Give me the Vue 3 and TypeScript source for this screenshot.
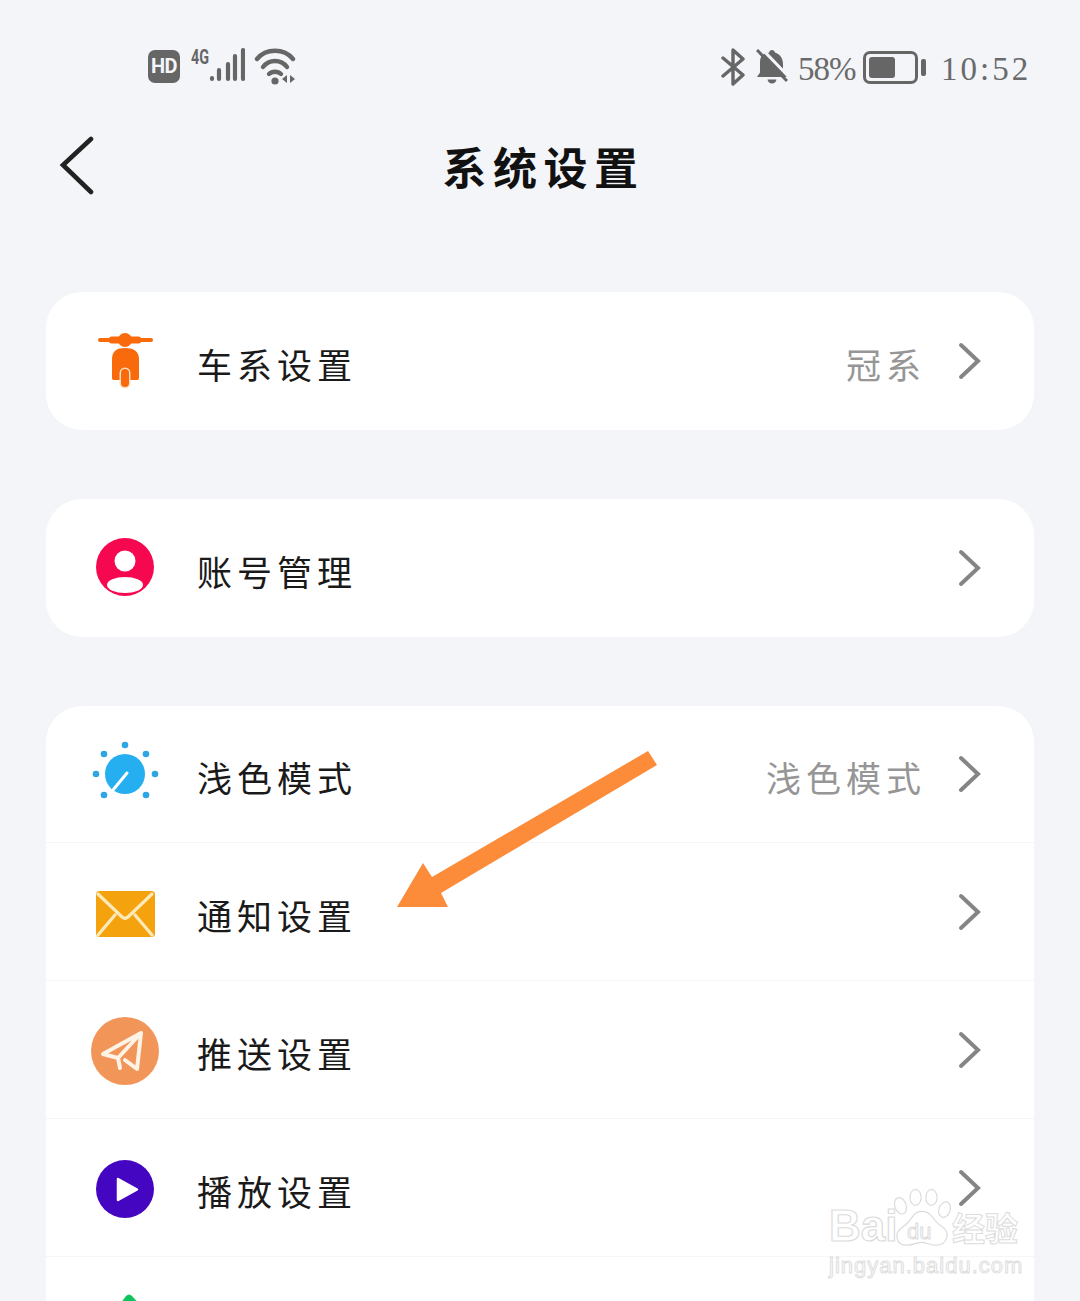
<script setup lang="ts">
interface Row {
  label: string
  icon: string
  value?: string
  first?: boolean
}
const groups: Row[][] = [
  [{ label: '车系设置', icon: 'scooter', value: '冠系' }],
  [{ label: '账号管理', icon: 'account' }],
  [
    { label: '浅色模式', icon: 'sun', value: '浅色模式', first: true },
    { label: '通知设置', icon: 'mail' },
    { label: '推送设置', icon: 'plane' },
    { label: '播放设置', icon: 'play' },
    { label: '', icon: 'green' },
  ],
]
const sunDots: [number, number][] = [
  [35, 6], [14, 15], [56, 15], [6, 35], [65, 35], [14, 56], [56, 56],
]
</script>

<template>
  <div class="page">
    <div class="status">
      <div class="status-left">
        <span class="hd">HD</span>
        <div class="net">
          <span class="g4">4G</span>
          <svg class="bars" width="36" height="36" viewBox="0 0 36 36">
            <g stroke="#666" stroke-width="4.2" stroke-linecap="round">
              <path d="M3 31v1M10 23v9M19 17v15M26 9v23M34 3v29" />
            </g>
          </svg>
        </div>
        <svg class="wifi" width="42" height="38" viewBox="0 0 42 38">
          <g fill="none" stroke="#666" stroke-width="4.4" stroke-linecap="round">
            <path d="M3 12C12 1 30 1 39 12" />
            <path d="M9 20C15 12 27 12 33 20" />
            <path d="M15 27C18 24 24 24 27 27" />
          </g>
          <circle cx="21" cy="34" r="3.6" fill="#666" />
          <path d="M33 28v8l-5-4zM36 28v8l5-4z" fill="#666" />
        </svg>
      </div>
      <div class="status-right">
        <svg class="bt" width="24" height="38" viewBox="0 0 24 38">
          <path d="M2 10L22 27L12 36V2L22 11L2 28" fill="none" stroke="#666" stroke-width="3.4" stroke-linejoin="round" stroke-linecap="round" />
        </svg>
        <svg class="bell" width="32" height="36" viewBox="0 0 32 36">
          <path d="M16 1c1.600 0 2.700 1 2.900 2.500C24 5 27 9.500 27 15v8l4 5H1l3-4.500V13c0-4 1.500-7 5-8.500 1.500-.6 3-.8 4-.6C13.300 2 14.400 1 16 1z" fill="#666" />
          <path d="M11.500 30.500h9c-.5 2.500-2.300 4-4.500 4s-4-1.500-4.500-4z" fill="#666" />
          <path d="M5 -1L34 29" stroke="#f4f5f9" stroke-width="3" />
          <path d="M1 1L31 32" stroke="#666" stroke-width="3" />
        </svg>
        <span class="pct">58%</span>
        <div class="battery">
          <div class="battery-body"><div class="battery-fill"></div></div>
          <div class="battery-nub"></div>
        </div>
        <span class="clock">10:52</span>
      </div>
    </div>

    <header class="header">
      <svg class="back" width="36" height="60" viewBox="0 0 36 60">
        <path d="M32 3L4 29L32 56" fill="none" stroke="#222" stroke-width="4.600" stroke-linecap="round" stroke-linejoin="miter" />
      </svg>
      <h1 class="title">系统设置</h1>
    </header>

    <main class="groups">
      <section v-for="(group, gi) in groups" :key="gi" class="card">
        <div
          v-for="(row, ri) in group"
          :key="ri"
          class="row"
          :class="{ 'row-first': row.first, 'row-rule': ri > 0 }"
        >
          <svg class="icon" width="70" height="70" viewBox="0 0 70 70">
            <template v-if="row.icon === 'scooter'">
              <path d="M10 14H61" stroke="#f96a0c" stroke-width="4" stroke-linecap="round" />
              <path d="M22 14H48" stroke="#f96a0c" stroke-width="7" stroke-linecap="round" />
              <circle cx="35" cy="14" r="7" fill="#f96a0c" />
              <path d="M22 33c0-8 5-11 13-11s14 3 14 11v19c0 1.500-1 2-2 2H24c-1 0-2-.5-2-2z" fill="#f96a0c" />
              <rect x="29.500" y="41.500" width="11" height="21" rx="5.500" fill="#fde0c4" />
              <rect x="31" y="43" width="8" height="18" rx="4" fill="#f96a0c" />
            </template>
            <template v-else-if="row.icon === 'account'">
              <circle cx="35" cy="34" r="29" fill="#f5084f" />
              <circle cx="35" cy="28" r="10.500" fill="#fff" />
              <ellipse cx="35" cy="52" rx="18" ry="8" fill="#fff" />
            </template>
            <template v-else-if="row.icon === 'sun'">
              <circle cx="35" cy="35" r="20" fill="#25aef0" />
              <circle v-for="(d, i) in sunDots" :key="i" :cx="d[0]" :cy="d[1]" r="3.300" fill="#2fa6e3" />
              <path d="M23 51L37 34" stroke="#fff" stroke-width="3" stroke-linecap="round" />
            </template>
            <template v-else-if="row.icon === 'mail'">
              <rect x="6" y="14" width="59" height="46" rx="3.500" fill="#f5a20f" />
              <path d="M8 17L32 40Q35 42.500 38 40L62 17M8 58L25 38M62 58L45 38" fill="none" stroke="#fdeab8" stroke-width="3.200" stroke-linecap="round" />
            </template>
            <template v-else-if="row.icon === 'plane'">
              <circle cx="35" cy="36" r="34" fill="#f29559" />
              <path d="M51 18L13 39L28 43L30 53M28 43L51 18L47 54L35 45" fill="none" stroke="#fff3e6" stroke-width="4" stroke-linecap="round" stroke-linejoin="round" />
            </template>
            <template v-else-if="row.icon === 'play'">
              <circle cx="35" cy="36" r="29" fill="#4406c0" />
              <path d="M28 26L47 36.500L28 47z" fill="#fff" stroke="#fff" stroke-width="2.500" stroke-linejoin="round" />
            </template>
            <template v-else-if="row.icon === 'green'">
              <path d="M36 5Q39 2 42 5L52 16H28z" fill="#0fc45f" />
            </template>
          </svg>
          <span class="label">{{ row.label }}</span>
          <span v-if="row.value" class="value">{{ row.value }}</span>
          <svg class="chev" width="24" height="38" viewBox="0 0 24 38">
            <path d="M3 3L20 19L3 35" fill="none" stroke="#858585" stroke-width="4" stroke-linecap="round" />
          </svg>
        </div>
      </section>
    </main>

    <svg class="arrow" width="300" height="190" viewBox="380 740 300 190">
      <polygon points="648,751 657,765 441,893 448,907 397,907 423,863 432,877" fill="#fd8c3a" />
    </svg>

    <div class="watermark">
      <div class="wm-top">
        <span class="wm-bai">Bai</span>
        <div class="wm-paw">
          <svg width="60" height="62" viewBox="0 0 64 62">
            <g fill="none" stroke="#dcdcdc" stroke-width="1.300">
              <ellipse cx="8" cy="18" rx="6" ry="9" transform="rotate(-20 8 18)" />
              <ellipse cx="24" cy="9" rx="6" ry="8.500" />
              <ellipse cx="41" cy="9" rx="6" ry="8.500" />
              <ellipse cx="55" cy="22" rx="6" ry="8.500" transform="rotate(20 55 22)" />
              <path d="M31 24C42 24 42 34 52 40C62 46 58 60 46 60C38 60 36 57 31 57C25 57 22 60 15 60C3 60 0 47 11 40C21 34 20 24 31 24Z" />
            </g>
          </svg>
          <span class="wm-du">du</span>
        </div>
        <span class="wm-cn">经验</span>
      </div>
      <div class="wm-url">jingyan.baidu.com</div>
    </div>
  </div>
</template>

<style scoped>
.page {
  position: relative;
  width: 1080px;
  height: 1301px;
  overflow: hidden;
  background: #f4f5f9;
  font-family: "Noto Sans CJK SC", "Liberation Sans", sans-serif;
  color: #111;
}
.status {
  height: 110px;
  box-sizing: border-box;
  padding: 46px 52px 0 148px;
  display: flex;
  justify-content: space-between;
  align-items: flex-start;
}
.status-left {
  display: flex;
  align-items: flex-start;
}
.hd {
  width: 32px;
  height: 33px;
  margin-top: 4px;
  border-radius: 7px;
  background: #666;
  color: #f4f5f9;
  font: 700 20px/33px "Roboto", sans-serif;
  text-align: center;
  letter-spacing: -0.5px;
}
.net {
  position: relative;
  margin-left: 11px;
  width: 54px;
  height: 38px;
}
.g4 {
  position: absolute;
  left: 0;
  top: 0;
  font: 700 20px/22px "Roboto", sans-serif;
  color: #666;
  transform: scaleX(0.72);
  transform-origin: left top;
}
.bars {
  position: absolute;
  left: 18px;
  top: 1px;
}
.wifi {
  margin-left: 9px;
  margin-top: 1px;
}
.status-right {
  display: flex;
  align-items: center;
  height: 44px;
  margin-top: -1px;
}
.bt {
  margin-right: 11px;
}
.pct {
  margin-left: 10px;
  margin-top: 3px;
  font: 400 33px/44px "Liberation Serif", serif;
  color: #6a6a6a;
  width: 58px;
  white-space: nowrap;
  letter-spacing: -1px;
}
.battery {
  display: flex;
  align-items: center;
  margin-left: 7px;
}
.battery-body {
  box-sizing: border-box;
  width: 55px;
  height: 33px;
  padding: 3px;
  border: 3px solid #666;
  border-radius: 7px;
}
.battery-fill {
  width: 26px;
  height: 100%;
  border-radius: 3px;
  background: #666;
}
.battery-nub {
  width: 5px;
  height: 17px;
  margin-left: 3px;
  border-radius: 2px;
  background: #666;
}
.clock {
  width: 87px;
  margin-left: 15px;
  margin-top: 3px;
  font: 400 33px/44px "Liberation Serif", serif;
  color: #6a6a6a;
  letter-spacing: 3px;
  white-space: nowrap;
}
.header {
  position: relative;
  height: 116px;
  display: flex;
  align-items: center;
  justify-content: center;
}
.back {
  position: absolute;
  left: 59px;
  top: 26px;
}
.title {
  margin: -4px -7px 0 0;
  font-size: 44px;
  font-weight: 700;
  line-height: 60px;
  letter-spacing: 6.500px;
  color: #111;
}
.groups {
  margin-top: 66px;
  padding: 0 46px;
  display: flex;
  flex-direction: column;
  gap: 69px;
}
.card {
  background: #fff;
  border-radius: 36px;
}
.row {
  box-sizing: border-box;
  height: 138px;
  display: flex;
  align-items: center;
  padding: 0 52px 0 44px;
}
.row-first {
  height: 136px;
}
.row-rule {
  border-top: 1px solid #f5f5f5;
}
.icon {
  flex: none;
}
.label {
  margin-left: 37px;
  margin-top: 6px;
  flex: 1;
  font-size: 35px;
  line-height: 50px;
  letter-spacing: 5px;
  font-weight: 400;
  color: #1a1a1a;
}
.value {
  margin-top: 6px;
  font-size: 35px;
  line-height: 50px;
  letter-spacing: 5px;
  font-weight: 400;
  color: #969696;
  margin-right: 32px;
}
.chev {
  flex: none;
  display: block;
}
.arrow {
  position: absolute;
  left: 380px;
  top: 740px;
}
.watermark {
  position: absolute;
  left: 829px;
  top: 1183px;
  width: 194px;
  pointer-events: none;
}
.wm-top {
  display: flex;
  align-items: flex-end;
  height: 66px;
}
.wm-bai {
  font: 700 44px/46px "Liberation Sans", sans-serif;
  color: transparent;
  -webkit-text-stroke: 1.200px #dcdcdc;
  letter-spacing: 0;
  width: 64px;
}
.wm-paw {
  position: relative;
  width: 60px;
  height: 62px;
}
.wm-du {
  position: absolute;
  left: 14px;
  top: 33px;
  font: 400 22px/24px "Liberation Sans", sans-serif;
  color: transparent;
  -webkit-text-stroke: 1px #dcdcdc;
}
.wm-cn {
  margin-left: -1px;
  font-size: 33px;
  line-height: 44px;
  font-weight: 700;
  color: transparent;
  -webkit-text-stroke: 1px #dcdcdc;
  white-space: nowrap;
}
.wm-url {
  margin-top: 3px;
  font: 400 22px/28px "Liberation Sans", sans-serif;
  color: transparent;
  -webkit-text-stroke: 1px #dedede;
  white-space: nowrap;
  letter-spacing: 1px;
}
</style>
